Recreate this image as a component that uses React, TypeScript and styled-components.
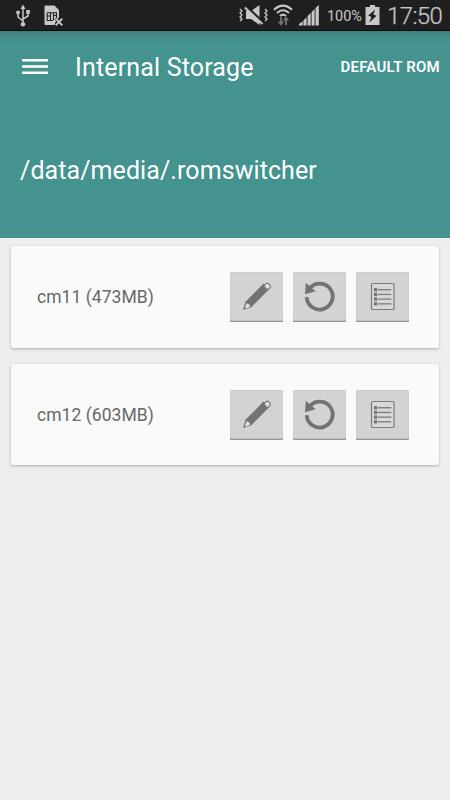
import React from 'react';
import styled, { createGlobalStyle } from 'styled-components';

const GlobalStyle = createGlobalStyle`
  * { box-sizing: border-box; }
  body { margin: 0; background: #eee; font-family: Roboto, "Noto Sans", sans-serif; }
`;

const Screen = styled.div`
  width: 450px;
  height: 800px;
  overflow: hidden;
  background: #eee;
`;

const StatusBar = styled.div`
  display: flex;
  justify-content: space-between;
  height: 31px;
  background: #1f1f1f;
  border-bottom: 1px solid #12090c;
  color: #c8c8c8;
`;

const StatusGroup = styled.div`
  display: flex;
  align-items: center;
  height: 30px;
`;

const StatusIcon = styled.svg<{ $gap: number }>`
  display: block;
  flex: none;
  margin-left: ${p => p.$gap}px;
`;

const Percent = styled.span`
  width: 36px;
  margin: 3px 0 0 7px;
  font-size: 14.5px;
  letter-spacing: -0.05px;
  line-height: 18px;
  white-space: nowrap;
`;

const Clock = styled.span`
  width: 63px;
  margin: 2px 0 0 7px;
  font-size: 24px;
  font-weight: 300;
  letter-spacing: -0.6px;
  line-height: 28px;
  white-space: nowrap;
  -webkit-text-stroke: 0.25px #c8c8c8;
`;

const Header = styled.header`
  height: 207px;
  color: #fff;
  background: linear-gradient(#3e7f7b, #439089 7px, #44938e 13px);
`;

const Toolbar = styled.div`
  display: flex;
  align-items: center;
  height: 72px;
  padding: 0 10px 0 22px;
`;

const MenuButton = styled.button`
  width: 26px;
  height: 16px;
  padding: 0;
  border: 0;
  background: none;
`;

const Title = styled.h1`
  flex: 1;
  margin: 1px 0 0 27px;
  font-size: 25px;
  font-weight: 400;
  letter-spacing: 0.16px;
  line-height: 30px;
`;

const Action = styled.button`
  padding: 0;
  border: 0;
  background: none;
  color: #fff;
  font: 600 15px/18px Roboto, sans-serif;
  letter-spacing: 0.25px;
  white-space: nowrap;
`;

const Path = styled.div`
  padding: 53px 20px 0;
  font-size: 25px;
  letter-spacing: 0.08px;
  line-height: 30px;
`;

const CardList = styled.main`
  display: grid;
  gap: 16px;
  padding: 8px 11px;
`;

const Card = styled.section`
  display: flex;
  align-items: center;
  justify-content: space-between;
  height: 101.5px;
  padding: 0.6px 30px 0 26px;
  border-radius: 2px;
  background: #fafafa;
  box-shadow: 0 1px 3px rgba(0, 0, 0, 0.28);
`;

const RomName = styled.span`
  color: #686868;
  font-size: 17.5px;
  letter-spacing: 0.05px;
  line-height: 22px;
  white-space: nowrap;
`;

const Actions = styled.div`
  display: flex;
  gap: 10px;
`;

const IconButton = styled.button`
  width: 53px;
  height: 50px;
  padding: 0;
  border: 0;
  border-radius: 1.5px;
  background: #d3d3d3;
  box-shadow: inset 0 -1.2px 0 #929292, inset 0 0 0 0.5px #c6c6c6;
`;

const Glyph = styled.svg`
  display: block;
`;

const MenuIcon = () => (
  <Glyph width="26" height="16" viewBox="0 0 26 16">
    <path d="M0 1.3H26M0 7.5H26M0 13.7H26" stroke="#fff" strokeWidth="2.4" />
  </Glyph>
);

const PencilIcon = () => (
  <Glyph width="53" height="50" viewBox="0 0 53 50">
    <path d="M13 38L15.4 29.8L33.6 11.6L39.2 17.2L21 35.4Z" fill="#737373" />
    <path d="M16.6 31.3L14.9 35.3L16.2 36.5L20.2 34.7L19.2 32.2Z" fill="#dedede" />
    <path d="M33.8 14.2L36 11.7Q37.3 10.5 38.7 11.8L40 13.2Q41 14.5 39.8 15.8L37.4 18Z" fill="#e0e0e0" stroke="#737373" strokeWidth="1.1" />
  </Glyph>
);

const RestoreIcon = () => (
  <Glyph width="53" height="50" viewBox="0 0 53 50">
    <path d="M13.7 25.2A13 13 0 1 0 16.8 16.1" fill="none" stroke="#737373" strokeWidth="3.8" />
    <path d="M12.8 10.7L12 22.2L22.7 19.2Z" fill="#737373" />
  </Glyph>
);

const ListIcon = () => (
  <Glyph width="53" height="50" viewBox="0 0 53 50">
    <rect x="15.5" y="11.5" width="22.5" height="26" rx="1.3" fill="#d8d8d8" stroke="#7b7b7b" strokeWidth="1.2" />
    {[16, 20.7, 25.4, 30.1].map(y => (
      <g key={y}>
        <rect x="18" y={y} width="3.2" height="3.4" fill="#767676" />
        <rect x="22" y={y + 1.1} width="13.3" height="1.3" fill="#7b7b7b" />
      </g>
    ))}
  </Glyph>
);

const UsbIcon = () => (
  <StatusIcon $gap={15} width="16" height="30" viewBox="0 0 16 30" fill="none" stroke="#c8c8c8" strokeWidth="1.5">
    <path d="M8 8V24M8 21L3 17V13M8 19L13 16V12" />
    <path d="M8 4.5L10.5 9H5.5Z" fill="#c8c8c8" stroke="none" />
    <circle cx="3" cy="12.5" r="1.9" fill="#c8c8c8" stroke="none" />
    <rect x="11.2" y="10" width="3.6" height="3.8" fill="#c8c8c8" stroke="none" />
    <circle cx="8" cy="24.2" r="2.3" fill="#c8c8c8" stroke="none" />
  </StatusIcon>
);

const NoSimIcon = () => (
  <StatusIcon $gap={13} width="20" height="30" viewBox="0 0 20 30">
    <path d="M1.5 5.5H10.5L15 10V18L11 23V25H1.5Q.5 25 .5 24V6.5Q.5 5.5 1.5 5.5Z" fill="#c8c8c8" />
    <path d="M3.2 12.8H12.5V19M3.2 12.8V20.5H9M6.5 13V20M9.5 13V20M3.2 16H6.5M9.5 15.5H12.5" fill="none" stroke="#222" strokeWidth="1.1" />
    <path d="M11.5 18.5L18.2 25.2M18.2 18.5L11.5 25.2" stroke="#1f1f1f" strokeWidth="3" />
    <path d="M11.7 18.7L18.3 25.3M18.3 18.7L11.7 25.3" stroke="#c8c8c8" strokeWidth="1.9" />
  </StatusIcon>
);

const MuteIcon = () => (
  <StatusIcon $gap={0} width="30" height="30" viewBox="0 0 30 30">
    <path d="M7 11H12L20.5 5V25L12 19H7Z" fill="#c8c8c8" />
    <path d="M7 6.5L24 22.5" stroke="#1f1f1f" strokeWidth="3" />
    <path d="M5.8 7.5L23.5 24" stroke="#c8c8c8" strokeWidth="2" />
    <path d="M1 9L3 11L1 13L3 15L1 17L3 19L1 21M26 9L28 11L26 13L28 15L26 17L28 19L26 21" fill="none" stroke="#c8c8c8" strokeWidth="1.3" />
  </StatusIcon>
);

const WifiIcon = () => (
  <StatusIcon $gap={4} width="20" height="30" viewBox="0 0 20 30" fill="none">
    <path d="M1 9.8Q10 1.5 19 9.8M4 13Q10 7.5 16 13M7 16Q10 13.2 13 16" stroke="#c8c8c8" strokeWidth="2.1" />
    <path d="M8 17V23M13 25V19" stroke="#747474" strokeWidth="1.8" />
    <path d="M4.8 21.5H11.2L8 25.7ZM9.8 20.5H16.2L13 16.5Z" fill="#747474" />
  </StatusIcon>
);

const SignalIcon = () => (
  <StatusIcon $gap={6} width="21" height="30" viewBox="0 0 21 30" fill="#c8c8c8">
    <path d="M0 25.5V24L3.6 21.2V25.5ZM4.4 25.5V20.4L7.6 17.3V25.5ZM8.6 25.5V16L11.7 13V25.5ZM12.6 25.5V12L15.6 9V25.5ZM16.5 25.5V8L19.8 5V25.5Z" />
  </StatusIcon>
);

const BatteryIcon = () => (
  <StatusIcon $gap={2} width="15" height="30" viewBox="0 0 15 30">
    <path d="M5 5H10V7H14.5V25H.5V7H5Z" fill="#c8c8c8" />
    <path d="M10.2 9.5L3.2 15.5L6.4 17L4.3 22.5L11.7 15.8L8.3 14.5Z" fill="#1f1f1f" />
  </StatusIcon>
);

const roms = [
  { name: 'cm11', size: '473MB' },
  { name: 'cm12', size: '603MB' },
];

export default function App() {
  return (
    <>
      <GlobalStyle />
      <Screen>
        <StatusBar>
          <StatusGroup><UsbIcon /><NoSimIcon /></StatusGroup>
          <StatusGroup>
            <MuteIcon /><WifiIcon /><SignalIcon />
            <Percent>100%</Percent>
            <BatteryIcon />
            <Clock>17:50</Clock>
          </StatusGroup>
        </StatusBar>
        <Header>
          <Toolbar>
            <MenuButton aria-label="Menu"><MenuIcon /></MenuButton>
            <Title>Internal Storage</Title>
            <Action>DEFAULT ROM</Action>
          </Toolbar>
          <Path>/data/media/.romswitcher</Path>
        </Header>
        <CardList>
          {roms.map(rom => (
            <Card key={rom.name}>
              <RomName>{`${rom.name} (${rom.size})`}</RomName>
              <Actions>
                <IconButton aria-label="Edit"><PencilIcon /></IconButton>
                <IconButton aria-label="Restore"><RestoreIcon /></IconButton>
                <IconButton aria-label="Details"><ListIcon /></IconButton>
              </Actions>
            </Card>
          ))}
        </CardList>
      </Screen>
    </>
  );
}
